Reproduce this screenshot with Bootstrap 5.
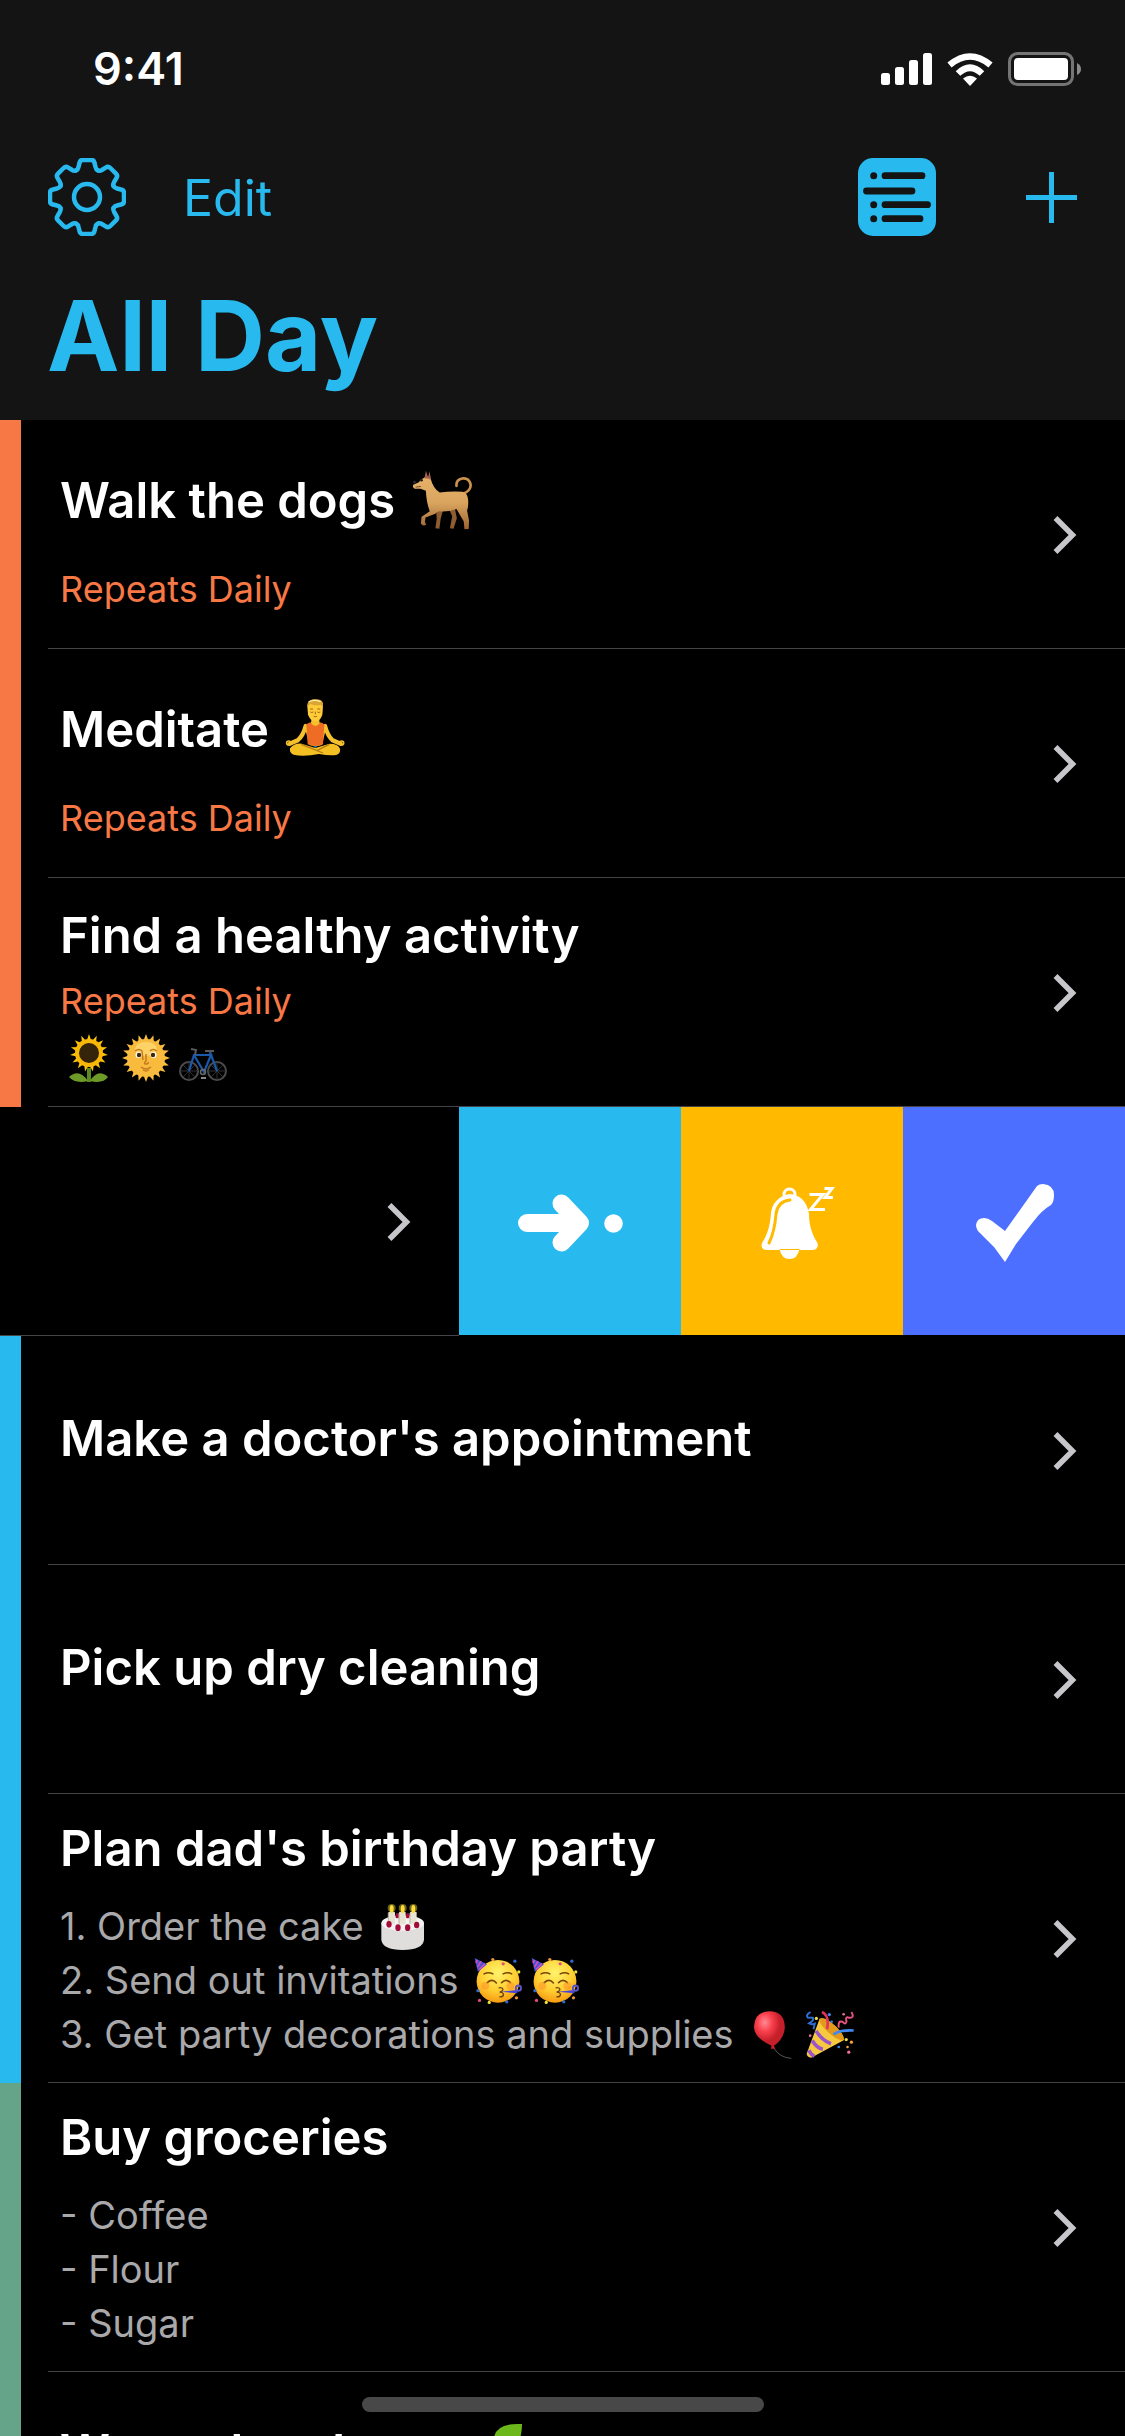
<!DOCTYPE html>
<html lang="en" data-bs-theme="dark">
<head>
<meta charset="utf-8">
<meta name="viewport" content="width=device-width, initial-scale=1">
<title>All Day</title>
<link href="https://cdn.jsdelivr.net/npm/bootstrap@5.3.0/dist/css/bootstrap.min.css" rel="stylesheet">
<style>
  :root { --sky: #28b9ef; --coral: #f77845; --sage: #65a488; --line: #444446; }
  body { background: #000; color: #fff; font-family: Inter, "Liberation Sans", sans-serif; }
  svg { display: block; flex: none; }
  .app-top { background: #141414; padding-bottom: 24px; }
  .status-row { height: 132px; padding: 0 43px 0 93px; }
  .clock { font-size: 45px; line-height: 54px; font-weight: 600; padding-top: 6px; }
  .status-icons { gap: 15px; padding-top: 6px; }
  .tool-row { height: 130px; padding: 0 48px; }
  .tool-row .btn { color: var(--sky); }
  .edit-btn { font-size: 50px; line-height: 60px; margin-left: 57px; padding-top: 2px !important; }
  .tool-right { gap: 90px; }
  .page-title { color: var(--sky); font-size: 97px; line-height: 120px; font-weight: 700; margin: 14px 47px 0; }

  .task-item { min-height: 229px; }
  .stripe { width: 21px; flex: none; }
  .stripe-coral { background: var(--coral); }
  .stripe-sky { background: var(--sky); }
  .stripe-sage { background: var(--sage); }
  .task-link { margin-left: 27px; padding: 0 48px 0 12px; color: #fff; border-bottom: 1px solid var(--line); }
  .task-title { font-size: 49px; line-height: 60px; font-weight: 600; margin: 0; }
  .repeat { font-size: 36px; line-height: 44px; color: var(--coral); margin: 0; }
  .notes { font-size: 38px; line-height: 54px; color: #a9a9ab; }
  .task-spaced { padding-top: 51px; }
  .task-spaced .repeat { margin-top: 36px; }
  .task-single { padding-top: 73px; }
  .task-dense { padding-top: 28px; }
  .task-dense .repeat { margin-top: 13px; }
  .task-notes { padding: 25px 0 21px; }
  .task-notes .notes { margin-top: 20px; }
  .chev-end { margin-top: 2px; }

  .emo { display: inline-block; margin-top: -14px; }
  .emo-lg { width: 62px; height: 62px; vertical-align: -12px; margin-left: 3px; }
  .emo-sm { width: 48px; height: 48px; vertical-align: -11px; margin-left: 5px; margin-right: 4px; }
  .emo-line { padding-top: 11px; }

  .swipe-item { height: 229px; }
  .swiped { padding-right: 48px; border-bottom: 1px solid var(--line); }
  .swipe-actions { flex: 0 0 auto; padding-bottom: 1px; }
  .swipe-btn { width: 222px; border: 0; padding: 3px 0 0; }
  .act-move { background: var(--sky); }
  .act-snooze { background: #ffba00; }
  .act-done { background: #4d6fff; }
  .home-bar { width: 402px; height: 15px; border-radius: 8px; background: #484848; bottom: 24px; }
</style>
<script src="https://cdn.jsdelivr.net/npm/bootstrap@5.3.0/dist/js/bootstrap.bundle.min.js"></script>
</head>
<body>
<svg width="0" height="0" class="position-absolute" aria-hidden="true">
  <defs>
    <path id="tooth" d="M-11-26.500Q-9-27.500-8.500-30L-7.500-34Q-7-37-4-37H4Q7-37 7.500-34L8.500-30Q9-27.500 11-26.500"/>
    <symbol id="chev" viewBox="0 0 24 40"><path d="M2.500 3 19.500 20 2.500 37" fill="none" stroke="#c6c6cb" stroke-width="5.500"/></symbol>
    <radialGradient id="faceFill" cx=".5" cy=".3" r=".7"><stop offset="0" stop-color="#fff36b"/><stop offset=".6" stop-color="#ffcf32"/><stop offset="1" stop-color="#f79a12"/></radialGradient>
    <symbol id="partyface" viewBox="308 181 148 148">
      <circle cx="382" cy="256" r="66" fill="url(#faceFill)"/>
      <path d="M310 184l38 19-28 24z" fill="#3c58d8"/>
      <path d="M318 190l-4 10M330 194l-12 19M342 201l-19 20" stroke="#e446b8" stroke-width="5"/>
      <path d="M339 233q14-7 27 0M398 233q14-7 26 0M349 260q15-14 28 1M393 260q14-14 27 0" fill="none" stroke="#7b4609" stroke-width="5" stroke-linecap="round"/>
      <circle cx="343" cy="270" r="12" fill="#ff8a2c" opacity=".5"/><circle cx="420" cy="270" r="12" fill="#ff8a2c" opacity=".5"/>
      <path d="M384 276q14-2 13 6-2 6-10 7 12 1 12 8-1 8-13 7" fill="none" stroke="#70400a" stroke-width="4"/>
      <path d="M390 288l52-5v10z" fill="#4a45d6"/><circle cx="445" cy="277" r="8" fill="none" stroke="#5a55c8" stroke-width="6"/>
      <g fill="#e64a78"><circle cx="398" cy="202" r="5"/><circle cx="325" cy="315" r="5"/></g>
      <g fill="#2f6ad0"><circle cx="434" cy="194" r="5"/><circle cx="320" cy="285" r="5"/><circle cx="409" cy="319" r="5"/></g>
      <g fill="#f0e03a"><circle cx="446" cy="227" r="5"/><circle cx="355" cy="321" r="5"/></g>
      <g fill="#f09a35"><circle cx="366" cy="189" r="5"/><circle cx="439" cy="307" r="5"/></g>
    </symbol>
  </defs>
</svg>

<div class="vh-100 overflow-hidden position-relative">
  <header class="app-top">
    <div class="status-row d-flex align-items-center justify-content-between">
      <span class="clock">9:41</span>
      <div class="status-icons d-flex align-items-center">
        <svg width="51" height="32" viewBox="0 0 51 32" fill="#fff" role="img" aria-label="Signal"><rect y="20" width="9" height="12" rx="2.500"/><rect x="14" y="14" width="9" height="18" rx="2.500"/><rect x="28" y="7" width="9" height="25" rx="2.500"/><rect x="42" width="9" height="32" rx="2.500"/></svg>
        <svg width="46" height="33" viewBox="948 52 46 33" role="img" aria-label="Wi-Fi"><path d="M950.500 64Q971 47 991.500 64M959 72.500Q971 61 983 72.500" fill="none" stroke="#fff" stroke-width="6.500"/><path d="M971 85l-7-7.500q7-5.500 14 0z" fill="#fff"/></svg>
        <svg width="74" height="34" viewBox="0 0 74 34" role="img" aria-label="Battery"><rect x="1.500" y="1.500" width="63" height="31" rx="8" fill="none" stroke="#757575" stroke-width="3"/><rect x="6" y="6" width="54" height="22" rx="4" fill="#fff"/><path d="M69 11q4 2 4 6t-4 6z" fill="#8b8b8b"/></svg>
      </div>
    </div>
    <nav class="tool-row d-flex align-items-center justify-content-between" aria-label="Toolbar">
      <div class="d-flex align-items-center">
        <button class="btn p-0 border-0" type="button" aria-label="Settings">
          <svg width="78" height="78" viewBox="-39 -39 78 78" fill="none" stroke="#28b9ef" stroke-width="4.500" stroke-linecap="round" stroke-linejoin="round"><circle r="13"/><use href="#tooth"/><use href="#tooth" transform="rotate(45)"/><use href="#tooth" transform="rotate(90)"/><use href="#tooth" transform="rotate(135)"/><use href="#tooth" transform="rotate(180)"/><use href="#tooth" transform="rotate(225)"/><use href="#tooth" transform="rotate(270)"/><use href="#tooth" transform="rotate(315)"/></svg>
        </button>
        <button class="btn p-0 border-0 edit-btn" type="button">Edit</button>
      </div>
      <div class="tool-right d-flex align-items-center">
        <button class="btn p-0 border-0" type="button" aria-label="List view">
          <svg width="78" height="78" viewBox="0 0 78 78"><rect width="78" height="78" rx="15" fill="#28b9ef"/><g fill="#141414"><circle cx="15.700" cy="17.700" r="3.500"/><circle cx="15.700" cy="46.700" r="3.500"/><circle cx="15.700" cy="60.700" r="3.500"/></g><path d="M27 17.700H64M8.500 33H54M27 46.700H69.500M27 60.700H62" stroke="#141414" stroke-width="6.800" stroke-linecap="round"/></svg>
        </button>
        <button class="btn p-0 border-0" type="button" aria-label="Add task">
          <svg width="51" height="51" viewBox="0 0 51 51"><path d="M23 0h5v23h23v5H28v23h-5V28H0v-5h23z" fill="#28b9ef"/></svg>
        </button>
      </div>
    </nav>
    <h1 class="page-title">All Day</h1>
  </header>

  <ul class="list-unstyled m-0">
    <li class="task-item d-flex">
      <span class="stripe stripe-coral"></span>
      <a href="#" class="task-link flex-grow-1 d-flex justify-content-between text-decoration-none">
        <div class="task-spaced">
          <h2 class="task-title">Walk the dogs
            <svg class="emo emo-lg" viewBox="12 12 188 188" role="img" aria-label="dog">
              <defs><linearGradient id="fur" x2="0" y2="1"><stop offset="0" stop-color="#e6b268"/><stop offset=".5" stop-color="#d9a45e"/><stop offset="1" stop-color="#9c6232"/></linearGradient></defs>
              <path d="M88 136l2 30-4 29 12 1 4-30 8-30zM128 138l9 20-7 37 11 1 10-32-6-30z" fill="#8f5d30"/>
              <path d="M170 90q27-11 22-31-6-18-25-15-19 4-17 22" fill="none" stroke="#cc924e" stroke-width="8" stroke-linecap="round"/>
              <path d="M51 42q8-8 20 0 8 32 28 44 35-4 70-2 14 4 16 22 2 22-3 35l6 30-1 26-13 1-2-24-22-38q-30 10-52 7-7 1-12 8l-30 11-2 14 4 8q-10 6-16-4l2-20 25-17q-10-24-12-62l-16-6-18 0q-8-6-4-12l17-8q4-10 15-13z" fill="url(#fur)"/>
              <path d="M53 44l4-24 8 24zM63 44l5-22 5 26z" fill="#a5614f"/><circle cx="44" cy="49" r="4" fill="#241b18"/><path d="M18 57q-1-7 6-6l5 3-5 6z" fill="#2b2530"/>
              <path d="M26 70l16-2" stroke="#72452b" stroke-width="3"/>
            </svg></h2>
          <p class="repeat">Repeats Daily</p>
        </div>
        <svg class="chev-end align-self-center" width="24" height="40"><use href="#chev"/></svg>
      </a>
    </li>
    <li class="task-item d-flex">
      <span class="stripe stripe-coral"></span>
      <a href="#" class="task-link flex-grow-1 d-flex justify-content-between text-decoration-none">
        <div class="task-spaced">
          <h2 class="task-title">Meditate
            <svg class="emo emo-lg" viewBox="54 -4 186 186" role="img" aria-label="person in lotus position">
              <path d="M72 150q12-16 35-14l41 13 43-13q25 0 31 15 2 13-9 18-16 5-54-2-47 9-76 2-13-4-11-19z" fill="#f4bf23"/>
              <path d="M106 138l65 26M190 138l-36 18" stroke="#b37a10" stroke-width="4" fill="none"/>
              <path d="M139 141h18l-9 8z" fill="#2f78b6"/>
              <path d="M119 83q-8 30-24 43l-24 10M177 83q8 30 23 43l24 10" fill="none" stroke="#f5c02d" stroke-width="13" stroke-linecap="round"/>
              <circle cx="68" cy="134" r="6" fill="none" stroke="#f5c02d" stroke-width="5"/><circle cx="227" cy="134" r="6" fill="none" stroke="#f5c02d" stroke-width="5"/>
              <path d="M137 60h22l2 13q18 3 19 17l-12 50q-19 6-38 0l-13-50q1-14 18-17z" fill="#f5c02d"/>
              <path d="M121 78l12-6q15 22 31 0l11 6-4 60q-23 10-46 0z" fill="#ef6c25"/>
              <path d="M124 23q1-19 24-19t23 19l-2 26q-7 20-21 20t-22-20z" fill="#ffcb37"/>
              <path d="M124 27q-2-21 17-24 27-3 30 12l-1 14-5-10q-15 5-33-2z" fill="#d8a536"/><path d="M128 11q15-9 36-1" stroke="#fff0a5" stroke-width="4" fill="none"/>
              <path d="M132 32h9M154 32h9M133 41q4 3 9 0M154 41q4 3 9 0M143 54q5 3 10 0M148 40v8" stroke="#8c5914" stroke-width="2.500" fill="none"/>
            </svg></h2>
          <p class="repeat">Repeats Daily</p>
        </div>
        <svg class="chev-end align-self-center" width="24" height="40"><use href="#chev"/></svg>
      </a>
    </li>
    <li class="task-item d-flex">
      <span class="stripe stripe-coral"></span>
      <a href="#" class="task-link flex-grow-1 d-flex justify-content-between text-decoration-none">
        <div class="task-dense">
          <h2 class="task-title">Find a healthy activity</h2>
          <p class="repeat">Repeats Daily</p>
          <div class="emo-line d-flex align-items-center">
            <svg class="emo-sm" viewBox="0 0 48 48" role="img" aria-label="sunflower">
              <path d="M24 34v14" stroke="#5b8a20" stroke-width="4"/><path d="M23 47Q10 50 4 43q10-9 19 4zM25 47q13 3 18-4-10-9-18 4z" fill="#6c9b27"/>
              <g fill="#ffc20a"><path id="pet" d="M20 12 24 0l4 12-4 9z"/><use href="#pet" transform="rotate(24 24 19)"/><use href="#pet" transform="rotate(48 24 19)"/><use href="#pet" transform="rotate(72 24 19)"/><use href="#pet" transform="rotate(96 24 19)"/><use href="#pet" transform="rotate(120 24 19)"/><use href="#pet" transform="rotate(144 24 19)"/><use href="#pet" transform="rotate(168 24 19)"/><use href="#pet" transform="rotate(192 24 19)"/><use href="#pet" transform="rotate(216 24 19)"/><use href="#pet" transform="rotate(240 24 19)"/><use href="#pet" transform="rotate(264 24 19)"/><use href="#pet" transform="rotate(288 24 19)"/><use href="#pet" transform="rotate(312 24 19)"/><use href="#pet" transform="rotate(336 24 19)"/></g>
              <circle cx="24" cy="19" r="14" fill="#f9b808"/><circle cx="24" cy="19" r="10" fill="#35230a"/>
            </svg>
            <svg class="emo-sm" viewBox="0 0 48 48" role="img" aria-label="sun with face">
              <g fill="#fbbf3c"><path id="ray" d="M21 8 24 0l3 8z"/><use href="#ray" transform="rotate(18 24 24)"/><use href="#ray" transform="rotate(36 24 24)"/><use href="#ray" transform="rotate(54 24 24)"/><use href="#ray" transform="rotate(72 24 24)"/><use href="#ray" transform="rotate(90 24 24)"/><use href="#ray" transform="rotate(108 24 24)"/><use href="#ray" transform="rotate(126 24 24)"/><use href="#ray" transform="rotate(144 24 24)"/><use href="#ray" transform="rotate(162 24 24)"/><use href="#ray" transform="rotate(180 24 24)"/><use href="#ray" transform="rotate(198 24 24)"/><use href="#ray" transform="rotate(216 24 24)"/><use href="#ray" transform="rotate(234 24 24)"/><use href="#ray" transform="rotate(252 24 24)"/><use href="#ray" transform="rotate(270 24 24)"/><use href="#ray" transform="rotate(288 24 24)"/><use href="#ray" transform="rotate(306 24 24)"/><use href="#ray" transform="rotate(324 24 24)"/><use href="#ray" transform="rotate(342 24 24)"/></g>
              <circle cx="24" cy="24" r="19" fill="#f8bb3e"/><ellipse cx="24" cy="15" rx="11" ry="7" fill="#fdd368"/>
              <circle cx="16.500" cy="21" r="3" fill="#fff"/><circle cx="31.500" cy="21" r="3" fill="#fff"/><circle cx="17" cy="21" r="2.200" fill="#3a2810"/><circle cx="31" cy="21" r="2.200" fill="#3a2810"/>
              <path d="M13 17q4-3 7 0l1 9M35 17q-4-3-7 0M24 20v7q-3 3 0 3t2-2M19 33q5 4 10 0M21 36q3 2 6 0" fill="none" stroke="#c5791d" stroke-width="1.500"/>
            </svg>
            <svg class="emo-sm" viewBox="0 0 48 48" role="img" aria-label="bicycle" fill="none">
              <g stroke="#4c4c4f" stroke-width="2"><circle cx="10" cy="37" r="9"/><circle cx="38" cy="37" r="9"/></g>
              <path d="M10 28v18M1 37h18M4 31l12 12M16 31 4 43M38 28v18M29 37h18M32 31l12 12M44 31 32 43" stroke="#303033" stroke-width="1"/>
              <path d="M10 37 15 21H32L25 38 15 21M38 37 31 18" stroke="#1a58a8" stroke-width="2.200"/>
              <path d="M26 17h9M12 15l5 1-1 5" stroke="#59595c" stroke-width="2"/><circle cx="24" cy="38" r="2.500" stroke="#68686b" stroke-width="1.500"/><path d="M22 44h5" stroke="#88888b" stroke-width="2"/>
            </svg>
          </div>
        </div>
        <svg class="chev-end align-self-center" width="24" height="40"><use href="#chev"/></svg>
      </a>
    </li>
    <li class="swipe-item d-flex">
      <a href="#" class="swiped flex-grow-1 d-flex align-items-center justify-content-end" aria-label="Open task">
        <svg class="chev-end" width="24" height="40"><use href="#chev"/></svg>
      </a>
      <div class="swipe-actions d-flex">
        <button type="button" class="swipe-btn act-move d-flex align-items-center justify-content-center" aria-label="Move to next day">
          <svg width="106" height="60" viewBox="517 1193 106 60"><path d="M527 1223h40M561.500 1203.500 580 1223l-18.500 19.500" fill="none" stroke="#fff" stroke-width="18" stroke-linecap="round" stroke-linejoin="round"/><path d="M561 1204l19 19-19 19z" fill="#fff"/><circle cx="613.500" cy="1223.500" r="9.300" fill="#fff"/></svg>
        </button>
        <button type="button" class="swipe-btn act-snooze d-flex align-items-center justify-content-center" aria-label="Snooze">
          <svg width="86" height="78" viewBox="-12 -3 86 78"><circle cx="28.500" cy="7.500" r="5.500" fill="none" stroke="#fff" stroke-width="3"/><path d="M28.500 7C17 9 11 17 10 26 9 40 6 48 1 56Q-1 62 5 63H52Q58 62 56.500 56C50 46 48 36 48 27 46 14 39 8 28.500 7ZM18.500 62h20q-2 10-10 10t-10-10z" fill="#fff"/><path d="M29 13C20 14 16 19 15 27 14 40 12 48 8 56" fill="none" stroke="#ffba00" stroke-width="3" stroke-linecap="round"/><path d="M48.500 7.500H62L49.500 22.500H64M63.500 1.500H71L64 10.500H72" fill="none" stroke="#fff" stroke-width="3"/></svg>
        </button>
        <button type="button" class="swipe-btn act-done d-flex align-items-center justify-content-center" aria-label="Mark done">
          <svg width="80" height="78" viewBox="-2 0 80 78"><path d="M67 0Q78 1 78 11 78 18 75 21 66 26 57 38L40 60 29 78 18 63 5 50Q0 46 0 41 1 34 8 34 12 34 16 37L29 47 44 26 61 2Q63 0 67 0Z" fill="#fff"/></svg>
        </button>
      </div>
    </li>
    <li class="task-item d-flex">
      <span class="stripe stripe-sky"></span>
      <a href="#" class="task-link flex-grow-1 d-flex justify-content-between text-decoration-none">
        <div class="task-single"><h2 class="task-title">Make a doctor's appointment</h2></div>
        <svg class="chev-end align-self-center" width="24" height="40"><use href="#chev"/></svg>
      </a>
    </li>
    <li class="task-item d-flex">
      <span class="stripe stripe-sky"></span>
      <a href="#" class="task-link flex-grow-1 d-flex justify-content-between text-decoration-none">
        <div class="task-single"><h2 class="task-title">Pick up dry cleaning</h2></div>
        <svg class="chev-end align-self-center" width="24" height="40"><use href="#chev"/></svg>
      </a>
    </li>
    <li class="task-item d-flex">
      <span class="stripe stripe-sky"></span>
      <a href="#" class="task-link flex-grow-1 d-flex justify-content-between text-decoration-none">
        <div class="task-notes">
          <h2 class="task-title">Plan dad's birthday party</h2>
          <div class="notes">
            <div>1. Order the cake
              <svg class="emo emo-sm" viewBox="24 24 144 144" role="img" aria-label="birthday cake">
                <path d="M31 84v50q3 30 64 31 61-1 64-31V84z" fill="#e0dddd"/><ellipse cx="95" cy="84" rx="64" ry="23" fill="#f4f2f2"/>
                <g fill="#a40d38"><ellipse cx="79" cy="62" rx="6" ry="8"/><ellipse cx="110" cy="62" rx="6" ry="8"/></g>
                <g fill="#e7e4d2"><rect x="52" y="50" width="20" height="38" rx="3"/><rect x="84" y="50" width="20" height="38" rx="3"/><rect x="117" y="50" width="20" height="38" rx="3"/></g>
                <path d="M52 54v32M84 54v32M117 54v32" stroke="#b5b29c" stroke-width="3"/>
                <g fill="#a40d38"><ellipse cx="54" cy="88" rx="8" ry="10"/><ellipse cx="81" cy="98" rx="8" ry="10"/><ellipse cx="110" cy="98" rx="8" ry="10"/><ellipse cx="137" cy="90" rx="8" ry="10"/></g>
                <g fill="#6d641c"><circle cx="62" cy="39" r="12"/><circle cx="95" cy="39" r="12"/><circle cx="127" cy="39" r="12"/></g><g fill="#ffdb35"><ellipse cx="62" cy="42" rx="6" ry="12"/><ellipse cx="95" cy="42" rx="6" ry="12"/><ellipse cx="127" cy="42" rx="6" ry="12"/></g>
              </svg></div>
            <div>2. Send out invitations
              <svg class="emo emo-sm" role="img" aria-label="partying face"><use href="#partyface"/></svg><svg class="emo emo-sm" role="img" aria-label="partying face"><use href="#partyface"/></svg></div>
            <div>3. Get party decorations and supplies
              <svg class="emo emo-sm" viewBox="42 512 146 146" role="img" aria-label="balloon">
                <defs><radialGradient id="bal" cx=".35" cy=".3"><stop offset="0" stop-color="#ff8a92"/><stop offset=".5" stop-color="#fa3f4c"/><stop offset="1" stop-color="#c51f2a"/></radialGradient></defs>
                <path d="M117 624q18 30 54 32" fill="none" stroke="#555" stroke-width="3"/><path d="M104 513q46 1 47 48-2 35-33 57l4 9h-14l3-9q-52-23-54-57 1-47 47-48z" fill="url(#bal)"/>
              </svg><svg class="emo emo-sm" viewBox="216 511 148 148" role="img" aria-label="party popper">
                <path d="M258 535q15-8 50 24 28 28 24 42L232 655q-13-1-14-12z" fill="#f6c93e"/><path d="M258 535q15-8 50 24 28 28 24 42-19 3-50-27-29-28-24-39z" fill="#e39a1c"/>
                <path d="M247 572q17 29 46 40M235 602q14 23 33 27M225 632q6 14 17 18" fill="none" stroke="#9b55c9" stroke-width="11"/>
                <path d="M230 514q-15 9-9 17l16 1q5 9-12 17 7 5 18 1l-4 17" fill="none" stroke="#2f6fd8" stroke-width="6"/><path d="M265 514q24 10 16 53" fill="none" stroke="#e0335c" stroke-width="8"/><path d="M301 583q20-14 62-12" fill="none" stroke="#4088f0" stroke-width="8"/><path d="M317 562q-3-22 11-18 10 11 13-1-5-17 8-11 18 1 7-18" fill="none" stroke="#e8537f" stroke-width="6"/>
                <g fill="#3d86ee"><circle cx="288" cy="522" r="5"/><circle cx="295" cy="544" r="4"/><circle cx="317" cy="622" r="4"/></g><g fill="#f3a23a"><circle cx="356" cy="607" r="5"/><circle cx="344" cy="622" r="4"/></g><g fill="#f0e04a"><circle cx="248" cy="534" r="5"/><circle cx="340" cy="599" r="5"/></g><g fill="#ef6f9f"><circle cx="332" cy="521" r="4"/><circle cx="229" cy="587" r="4"/><circle cx="348" cy="638" r="5"/></g>
              </svg></div>
          </div>
        </div>
        <svg class="chev-end align-self-center" width="24" height="40"><use href="#chev"/></svg>
      </a>
    </li>
    <li class="task-item d-flex">
      <span class="stripe stripe-sage"></span>
      <a href="#" class="task-link flex-grow-1 d-flex justify-content-between text-decoration-none">
        <div class="task-notes">
          <h2 class="task-title">Buy groceries</h2>
          <div class="notes"><div>- Coffee</div><div>- Flour</div><div>- Sugar</div></div>
        </div>
        <svg class="chev-end align-self-center" width="24" height="40"><use href="#chev"/></svg>
      </a>
    </li>
    <li class="task-item d-flex">
      <span class="stripe stripe-sage"></span>
      <a href="#" class="task-link flex-grow-1 d-flex justify-content-between text-decoration-none">
        <div class="task-spaced"><h2 class="task-title">Water the plants
          <svg class="emo emo-lg" viewBox="0 0 62 62" role="img" aria-label="seedling"><path d="M34 60Q32 30 40 18" fill="none" stroke="#5aa017" stroke-width="5"/><path d="M34 32Q24 2 60 4 60 34 34 32z" fill="#6cb81b"/><path d="M32 46Q8 48 4 24 30 22 32 46z" fill="#6cb81b"/></svg></h2></div>
      </a>
    </li>
  </ul>
  <div class="home-bar position-absolute start-50 translate-middle-x"></div>
</div>
</body>
</html>
